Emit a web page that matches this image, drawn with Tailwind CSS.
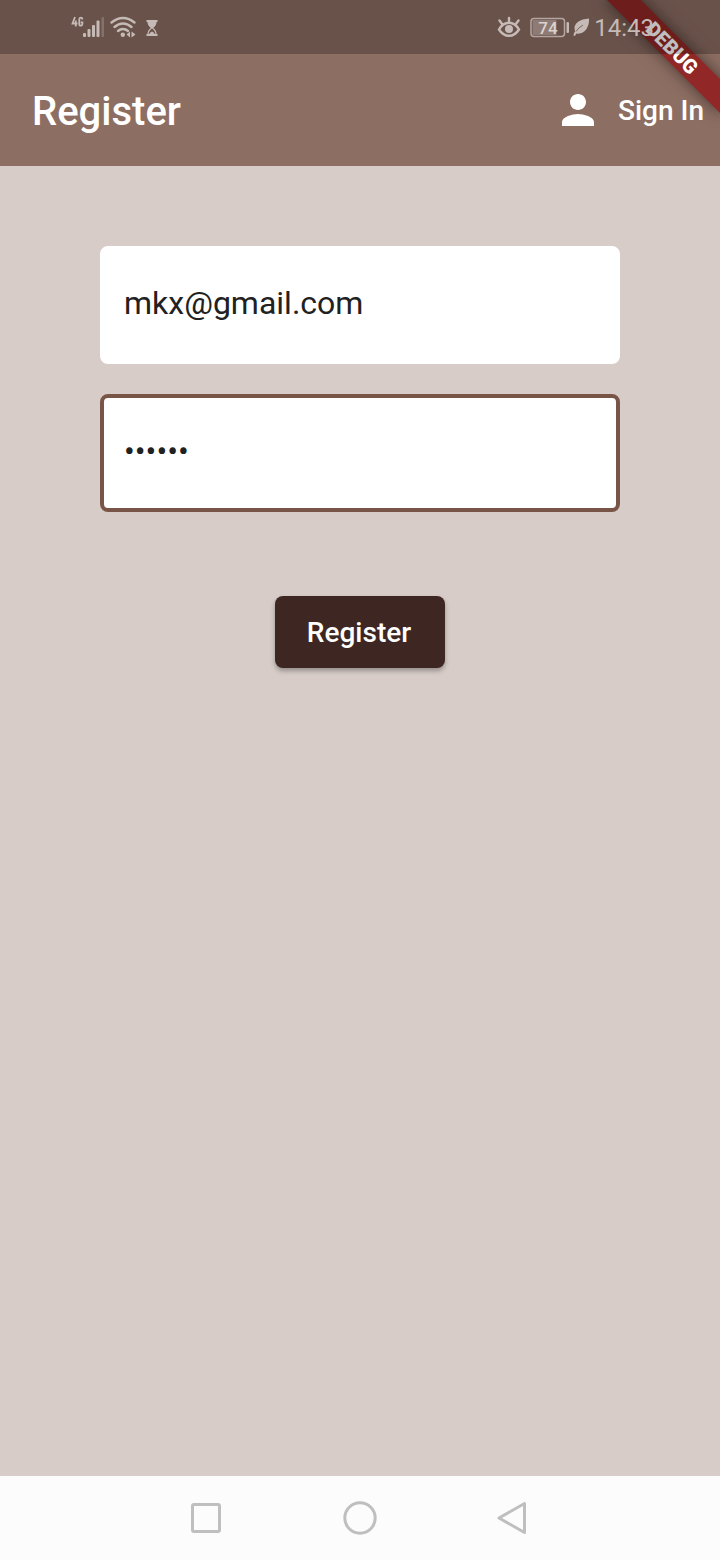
<!DOCTYPE html>
<html lang="en">
<head>
<meta charset="utf-8">
<meta name="viewport" content="width=device-width, initial-scale=1">
<title>Register</title>
<script src="https://cdn.jsdelivr.net/npm/@tailwindcss/browser@4"></script>
</head>
<body class="relative flex min-h-screen flex-col overflow-x-hidden bg-[#d7ccc8] font-['Roboto',sans-serif]">

  <!-- Debug ribbon across the top right corner -->
  <div class="pointer-events-none absolute top-0 right-0 z-10 size-40 overflow-hidden">
    <div class="absolute top-9 -right-8 flex h-6 w-40 rotate-45 items-center justify-center bg-[#912726] text-[20px] leading-none font-black text-white shadow-[0_0_16px_rgba(0,0,0,0.5)]">DEBUG</div>
  </div>

  <header class="bg-[#8d6e63] text-white">
    <!-- System status bar -->
    <div class="relative z-20 flex h-[54px] items-center justify-between bg-black/25 pr-[66px] pl-[70px] text-[#c6bab6]">
      <svg class="h-10 w-[90px]" viewBox="70 7 90 40" fill="currentColor" role="img" aria-label="4G signal, Wi-Fi, hourglass">
        <g fill="none" stroke="currentColor" stroke-width="1.800">
          <path d="M75 17L72.500 23.500H77.500M75.800 20.500V26.500"/>
          <path d="M82.300 19.500V19Q82.300 17.700 80.800 17.700T79.300 19.300V24Q79.300 25.700 80.800 25.700T82.400 24V22.300H80.800"/>
        </g>
        <rect x="83" y="33" width="3" height="4" rx="1"/>
        <rect x="87.500" y="29" width="3" height="8" rx="1"/>
        <rect x="92" y="25" width="3" height="12" rx="1"/>
        <rect x="96.500" y="20.500" width="3" height="16.500" rx="1"/>
        <rect x="101.500" y="17" width="2.500" height="20" rx="1" opacity=".3"/>
        <g fill="none" stroke="currentColor" stroke-width="2.400" stroke-linecap="round">
          <path d="M111.500 22.500Q117 18 123 18T134.500 22.500"/>
          <path d="M114.500 27Q118.500 23.500 123 23.500T131.500 27"/>
          <path d="M118 31Q120.300 29 123 29T128 31"/>
        </g>
        <circle cx="122.800" cy="34.800" r="2.200"/>
        <path d="M126.500 34.500L130 31.500V37.500ZM131.500 31.500L135.500 34.500L131.500 37.500Z"/>
        <path d="M146.500 20H157.500V22H146.500ZM146.500 34H157.500V36H146.500Z"/>
        <path d="M147.500 22H156.500Q156.500 25.500 153 28H151Q147.500 25.500 147.500 22Z"/>
        <path d="M151.500 28Q148 30.500 148 34.500H156Q156 30.500 152.500 28Z" fill="none" stroke="currentColor" stroke-width="1.200"/>
        <path d="M149 35Q149.500 32.300 152 31.500Q154.500 32.300 155 35Z"/>
      </svg>
      <div class="flex items-center">
        <svg class="h-10 w-[94px]" viewBox="497 7 94 40" fill="currentColor" role="img" aria-label="Eye comfort, battery 74 percent, power saving">
          <g fill="none" stroke="currentColor" stroke-width="2.400" stroke-linecap="round">
            <path d="M499 29.500Q503 22.800 509 22.800T519 29.500Q515 35.800 509 35.800T499 29.500Z"/>
            <path d="M509 18V22M499.500 20.500L502.500 24.500M518.500 20.500L515.500 24.500"/>
          </g>
          <circle cx="509" cy="29" r="4"/>
          <rect x="531" y="18.500" width="33.500" height="18" rx="3" fill="none" stroke="currentColor" stroke-width="1.500" opacity=".8"/>
          <rect x="532.500" y="20" width="24" height="15" opacity=".4"/>
          <text x="548" y="33.500" text-anchor="middle" font-size="17" font-weight="500" fill="#dcd3d0" font-family="Roboto, sans-serif">74</text>
          <rect x="566.500" y="22" width="2.500" height="11" rx="1"/>
          <path d="M573.500 35.500Q573.500 33 575 31.500Q573 25 578.500 21.500Q582 19 589 18.500Q589.500 24 586.500 29Q582.500 34.500 576.500 33.500Q575.500 34.500 575 36Z"/>
          <path d="M576 31.500Q578.500 27.500 583 25" stroke="#6a534a" stroke-width=".8" fill="none"/>
        </svg>
        <time datetime="14:43" class="ml-[3px] pt-0.5 text-[24px] leading-8">14:43</time>
      </div>
    </div>

    <!-- App bar -->
    <div class="flex h-28 items-center justify-between pr-4 pl-8">
      <h1 class="pt-1 text-[40px] leading-12 font-medium">Register</h1>
      <button type="button" class="flex items-center gap-4 text-[28px] leading-8 font-medium">
        <svg class="size-12" viewBox="0 0 24 24" fill="currentColor" aria-hidden="true"><path d="M12 12c2.210 0 4-1.790 4-4s-1.790-4-4-4-4 1.790-4 4 1.790 4 4 4zm0 2c-2.670 0-8 1.340-8 4v2h16v-2c0-2.660-5.330-4-8-4z"/></svg>
        <span class="pt-0.5">Sign In</span>
      </button>
    </div>
  </header>

  <main class="flex-1 px-[100px] pt-20">
    <form class="flex flex-col" onsubmit="return false">
      <input type="email" aria-label="Email" value="mkx@gmail.com" class="h-[118px] w-full rounded-lg border-4 border-white bg-white px-5 pb-1 text-[32px] text-[#212121] outline-none">
      <input type="password" aria-label="Password" value="secret" class="mt-[30px] h-[118px] w-full rounded-lg border-4 border-[#795548] bg-white px-5 pb-1 text-[32px] text-[#212121] outline-none">
      <button type="submit" class="mt-21 h-18 self-center rounded-lg bg-[#3e2723] pt-0.5 pr-[34px] pl-8 text-[28px] font-medium text-white shadow-[0_3px_5px_rgba(0,0,0,0.3)]">Register</button>
    </form>
  </main>

  <!-- System navigation -->
  <nav class="flex h-21 items-center justify-center gap-[113px] bg-[#fcfcfc] text-[#bfbfbf]" aria-label="System">
    <button type="button" aria-label="Recent apps"><svg class="size-10" viewBox="0 0 40 40" fill="none" stroke="currentColor" stroke-width="3"><rect x="5.500" y="6.500" width="27" height="27" rx="1.500"/></svg></button>
    <button type="button" aria-label="Home"><svg class="size-10" viewBox="0 0 40 40" fill="none" stroke="currentColor" stroke-width="3"><circle cx="20" cy="20" r="15.200"/></svg></button>
    <button type="button" aria-label="Back"><svg class="size-10" viewBox="0 0 40 40" fill="none" stroke="currentColor" stroke-width="3" stroke-linejoin="round"><path d="M31.500 5.500V34.500L6 20Z"/></svg></button>
  </nav>
</body>
</html>
